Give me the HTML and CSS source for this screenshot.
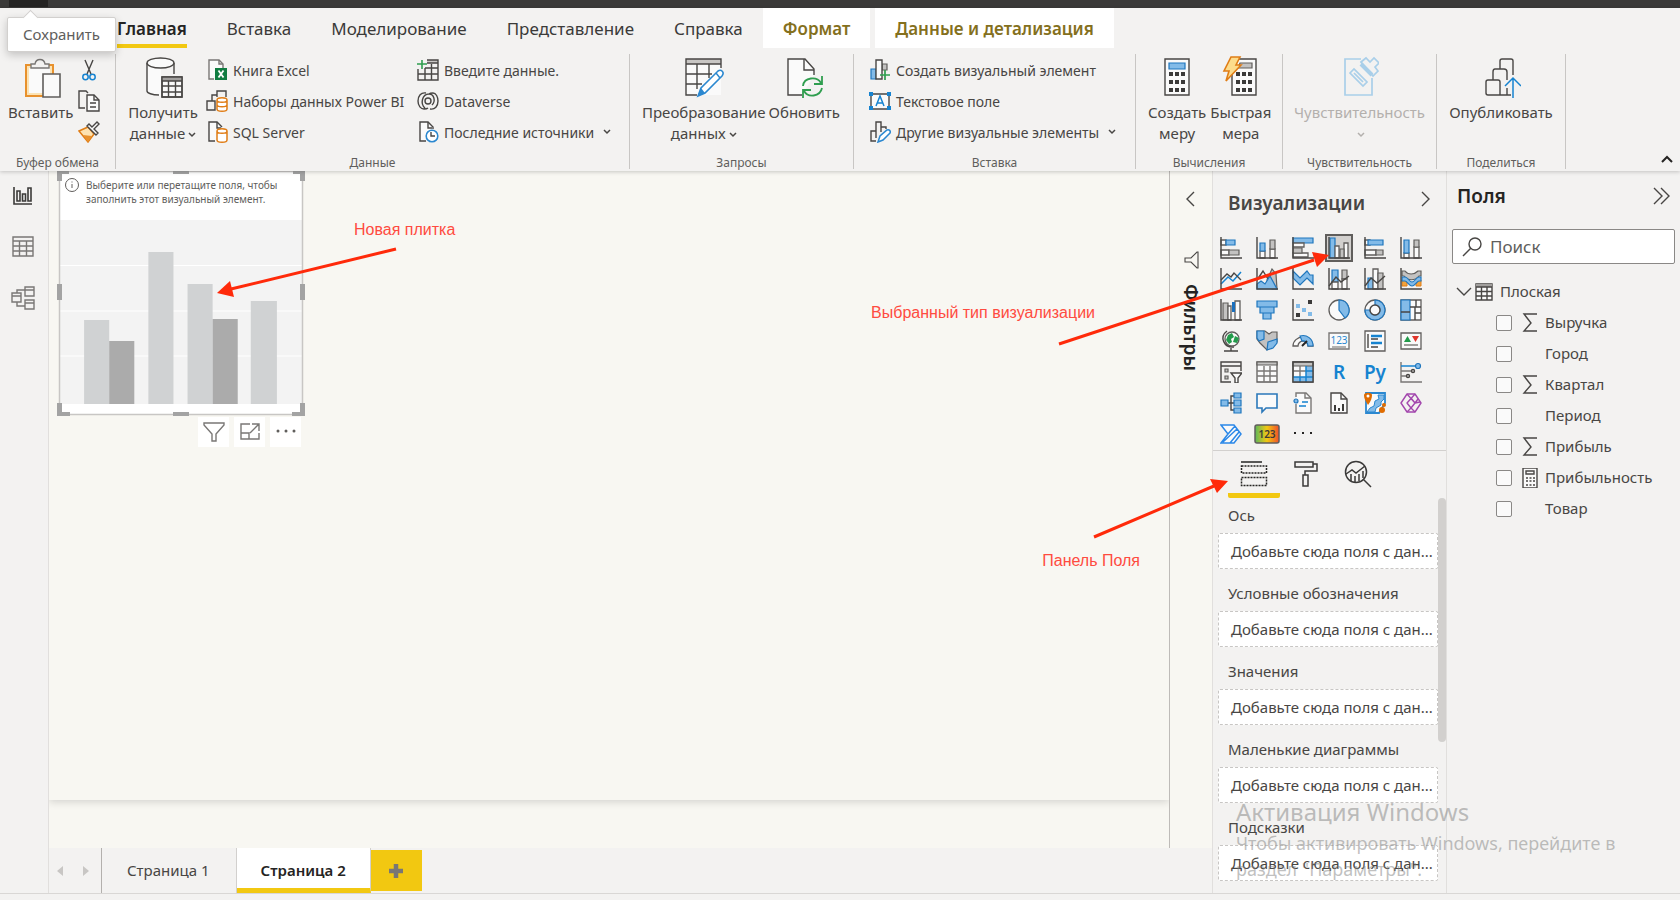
FILE: index.html
```html
<!DOCTYPE html>
<html lang="ru">
<head>
<meta charset="utf-8">
<title>Power BI Desktop</title>
<link rel="stylesheet" href="styles.css">
</head>
<body>
<div class="app">
  <div class="titlebar"><span class="titlebar-save"></span></div>
  <div class="tooltip" role="tooltip">Сохранить</div>

  <header class="ribbon">
    <nav class="tabs">
      <button class="tab tab-active">Главная</button>
      <button class="tab">Вставка</button>
      <button class="tab">Моделирование</button>
      <button class="tab">Представление</button>
      <button class="tab">Справка</button>
      <button class="tab tab-context">Формат</button>
      <button class="tab tab-context">Данные и детализация</button>
    </nav>

    <div class="groups">
      <section class="group">
        <div class="group-body clipboard">
          <button class="big">
            <svg width="40" height="42" viewBox="0 0 40 42"><path d="M5 9h27v31H5z" fill="#fbe3b4" stroke="#e8912d" stroke-width="2"/><path d="M8 12h21v25H8z" fill="#fafafa"/><path d="M10 12V8h4c1-6 9-6 10 0h4v4z" fill="#f3f2f1" stroke="#797775" stroke-width="1.4"/><path d="M22 18h17v23H22z" fill="#fafafa" stroke="#605e5c" stroke-width="1.6"/></svg>
            <span>Вставить</span>
          </button>
          <div class="mini-col">
            <button class="mini" aria-label="Вырезать"><svg width="22" height="22" viewBox="0 0 22 22"><path d="M7 1l6 14M15 1L9 15" class="k"/><circle cx="7.500" cy="18" r="2.700" class="o"/><circle cx="14.500" cy="18" r="2.700" class="o"/></svg></button>
            <button class="mini" aria-label="Копировать"><svg width="22" height="22" viewBox="0 0 22 22"><path d="M7 18H1V1h7l2 2" class="k"/><path d="M9 5h7l5 5v11H9z" class="k wf"/><path d="M16 5v5h5M12 13h6M12 17h6" class="k"/></svg></button>
            <button class="mini" aria-label="Формат по образцу"><svg width="22" height="22" viewBox="0 0 22 22"><path d="M1 10l9-4 6 7-6 8z" fill="#fde2b0" stroke="#e07d16" stroke-width="1.500"/><path d="M5 14l9 1-4 6z" fill="#e8912d"/><path d="M9 5l9 9 2-2-4-4 5-5-2-2-5 5-3-3z" class="k wf"/></svg></button>
          </div>
        </div>
        <div class="group-name">Буфер обмена</div>
      </section>

      <section class="group">
        <div class="group-body data">
          <button class="big">
            <svg width="40" height="42" viewBox="0 0 40 42"><path d="M4 7v28c0 3 6 5 14 5V8h14V7" fill="#fafafa"/><path d="M4 7v28c0 2 5 4 12 4M31 7v11" class="k"/><ellipse cx="17.500" cy="7" rx="13.500" ry="5" class="k wf"/><path d="M19 21h20v20H19z" class="k wf"/><path d="M19 21h20v4H19z" fill="#a19f9d"/><path d="M19 25h20M19 30h20M19 36h20M25.500 25v16M32.500 25v16M19 21h20v20H19z" class="k"/></svg>
            <span>Получить<br>данные<svg class="caret" width="8" height="6" viewBox="0 0 8 6"><path d="M1 1l3 3 3-3"/></svg></span>
          </button>
          <div class="links">
            <button class="link"><svg width="22" height="22" viewBox="0 0 22 22"><path d="M8 20H3V1h10l4 4v4" class="k wf lt"/><path d="M13 1v4h4" class="k lt"/><path d="M9 9h12v12H9z" fill="#107c41"/><path d="M12.500 11.500l5 7M17.500 11.500l-5 7" stroke="#fff" stroke-width="1.800"/></svg>Книга Excel</button>
            <button class="link"><svg width="22" height="22" viewBox="0 0 22 22"><path d="M1 11h8v9H1zM6 11V5h5M11 7V1h9v6" class="k"/><path d="M11 10v9c0 3 10 3 10 0v-9c0-3-10-3-10 0c0 3 10 3 10 0M11 14.500c0 3 10 3 10 0" fill="#fff" stroke="#e07d16" stroke-width="1.500"/></svg>Наборы данных Power BI</button>
            <button class="link"><svg width="22" height="22" viewBox="0 0 22 22"><path d="M9 20H3V1h8l5 5" class="k wf"/><path d="M11 1v6h4" class="k"/><path d="M11 10v9c0 3 10 3 10 0v-9c0-3-10-3-10 0c0 3 10 3 10 0" fill="#fff" stroke="#e07d16" stroke-width="1.500"/></svg>SQL Server</button>
          </div>
          <div class="links">
            <button class="link"><svg width="22" height="22" viewBox="0 0 22 22"><path d="M10 1h11v3H10z" fill="#c8c6c4"/><path d="M10 1h11v20H1V10M10 4h11M8 9h13M1 15h20M8 9v12M14.500 5v16" class="k"/><path d="M5 1v9M0 5h10" stroke="#2f9e4f" stroke-width="1.600"/></svg>Введите данные.</button>
            <button class="link"><svg width="22" height="22" viewBox="0 0 22 22"><path d="M9 3C4 2 1 6 1 11c0 5 3 8 6 8 1 0 3 0 4-1M13 19c5 1 8-3 8-8 0-4-2-8-5-8-2 0-3 0-4 1M8 18C3 14 5 4 12 4c5 0 7 7 3 11" class="k"/><circle cx="11" cy="11" r="3" class="k"/></svg>Dataverse</button>
            <button class="link"><svg width="22" height="22" viewBox="0 0 22 22"><path d="M9 20H3V1h8l5 5v2" class="k wf"/><path d="M11 1v6h4" class="k"/><circle cx="15" cy="15" r="5.800" fill="#fff" stroke="#2b88d0" stroke-width="1.600"/><path d="M14 11v4h4" class="k"/></svg>Последние источники<svg class="caret far" width="8" height="6" viewBox="0 0 8 6"><path d="M1 1l3 3 3-3"/></svg></button>
          </div>
        </div>
        <div class="group-name">Данные</div>
      </section>

      <section class="group">
        <div class="group-body queries">
          <button class="big">
            <svg width="40" height="42" viewBox="0 0 40 42"><path d="M2 3h35v36H2z" fill="#fafafa"/><path d="M2 3h35v5H2z" fill="#c8c6c4"/><path d="M37 12V3H2v36h11M2 8h35M2 18h26M2 28h16M13 8v25M25 8v14" class="k"/><path d="M14 40l3-8 17-17c3-2 7 1 4 5L21 37z" fill="#fff" stroke="#2b88d0" stroke-width="1.600"/><path d="M14 40l3-8 4 5z" fill="#2b88d0"/><path d="M32 17l4 5" stroke="#2b88d0" stroke-width="1.500"/></svg>
            <span>Преобразование<br>данных<svg class="caret" width="8" height="6" viewBox="0 0 8 6"><path d="M1 1l3 3 3-3"/></svg></span>
          </button>
          <button class="big">
            <svg width="40" height="42" viewBox="0 0 40 42"><path d="M18 39H4V3h17l9 10v6" class="k wf"/><path d="M20 3v11h10" class="k"/><path d="M19 30c1-9 14-10 18-3M38 20v8h-8M38 32c-2 9-14 10-18 3M19 42v-8h8" fill="none" stroke="#2f9e4f" stroke-width="1.800"/></svg>
            <span>Обновить</span>
          </button>
        </div>
        <div class="group-name">Запросы</div>
      </section>

      <section class="group">
        <div class="group-body insert">
          <div class="links">
            <button class="link"><svg width="22" height="22" viewBox="0 0 22 22"><path d="M2 10h5v10H2z" class="b"/><path d="M13 5h5v6h-5z" class="g"/><path d="M7 1h6v19H7z" class="k wf"/><path d="M16 11v10M11 16h10" stroke="#2f9e4f" stroke-width="1.700"/></svg>Создать визуальный элемент</button>
            <button class="link"><svg width="22" height="22" viewBox="0 0 22 22"><path d="M2 4h18v15H2z" class="k wf"/><path d="M7 16l4-10 4 10M8.500 13h5" class="o"/><path d="M0 2h4v4H0zM18 2h4v4h-4zM0 16h4v4H0zM18 16h4v4h-4z" fill="#1683d0"/></svg>Текстовое поле</button>
            <button class="link"><svg width="22" height="22" viewBox="0 0 22 22"><path d="M7 20H2V10h5M7 17V1h5v10M12 6h5v2" class="k"/><path d="M9 21l2-6 7-6c2-1 4 1 3 3l-7 7z" fill="#fff" stroke="#2b88d0" stroke-width="1.500"/></svg>Другие визуальные элементы<svg class="caret far" width="8" height="6" viewBox="0 0 8 6"><path d="M1 1l3 3 3-3"/></svg></button>
          </div>
        </div>
        <div class="group-name">Вставка</div>
      </section>

      <section class="group">
        <div class="group-body calc">
          <button class="big">
            <svg width="40" height="42" viewBox="0 0 40 42"><path d="M8 3h24v36H8z" class="k wf"/><path d="M12 7h16v6H12z" class="b"/><path d="M12 16h4v4h-4zM18 16h4v4h-4zM24 16h4v4h-4zM12 24h4v4h-4zM18 24h4v4h-4zM24 24h4v4h-4zM12 32h4v4h-4zM18 32h4v4h-4zM24 32h4v4h-4z" class="d"/></svg>
            <span>Создать<br>меру</span>
          </button>
          <button class="big">
            <svg width="40" height="42" viewBox="0 0 40 42"><path d="M11 3h24v36H11z" class="k wf"/><path d="M19 7h12v5H17z" class="g"/><path d="M15 16h4v4h-4zM21 16h4v4h-4zM27 16h4v4h-4zM15 24h4v4h-4zM21 24h4v4h-4zM27 24h4v4h-4zM15 32h4v4h-4zM21 32h4v4h-4zM27 32h4v4h-4z" class="d"/><path d="M10 1h9l-4 8h5L5 25l3-10H3z" fill="#fddc8c" stroke="#e07d16" stroke-width="1.600"/></svg>
            <span>Быстрая<br>мера</span>
          </button>
        </div>
        <div class="group-name">Вычисления</div>
      </section>

      <section class="group">
        <div class="group-body single">
          <button class="big big-off" disabled>
            <svg width="40" height="42" viewBox="0 0 40 42" fill="none" stroke="#a9cfe9" stroke-width="1.700"><path d="M22 3H6v36h27V22"/><path d="M11 17l4-4 13 13-4 4zM15 17l9 9"/><path d="M22 6l5-4 4 4 4-4 5 5-4 4 3 4-5 5z" fill="#f3f2f1"/><path d="M22 8l11 11" stroke-width="4"/></svg>
            <span>Чувствительность<br><svg class="caret" width="8" height="6" viewBox="0 0 8 6"><path d="M1 1l3 3 3-3"/></svg></span>
          </button>
        </div>
        <div class="group-name">Чувствительность</div>
      </section>

      <section class="group">
        <div class="group-body single">
          <button class="big">
            <svg width="40" height="42" viewBox="0 0 40 42"><path d="M32 19V5c0-1-1-2-2-2H21c-1 0-2 1-2 2v8M12 24V16c0-2 1-3 2-3h9c2 0 3 1 3 3v8M26 32v7M30 39H7c-1 0-2-1-2-2V26c0-1 1-2 2-2h10c1 0 2 1 2 2v13" class="k"/><path d="M32 42V22M24 30l8-8 8 8" class="o"/></svg>
            <span>Опубликовать</span>
          </button>
        </div>
        <div class="group-name">Поделиться</div>
      </section>

      <button class="collapse" aria-label="Свернуть ленту"><svg width="12" height="8" viewBox="0 0 12 8"><path d="M1 7l5-5 5 5" fill="none" stroke="#252423" stroke-width="2"/></svg></button>
    </div>
  </header>

  <main class="workspace">
    <aside class="rail">
      <button aria-label="Отчет"><svg width="24" height="24" viewBox="0 0 24 24" fill="none" stroke="#3b3a39" stroke-width="1.600"><path d="M3 3v17h18M6 7h3v10H6zM11.500 10h3v7h-3zM17 4h3v13h-3z"/></svg></button>
      <button aria-label="Данные"><svg width="24" height="24" viewBox="0 0 24 24" fill="none" stroke="#797775" stroke-width="1.400"><path d="M2 2h20v19H2zM2 6h20M2 11h20M2 16h20M8.500 6v15M15.500 6v15"/></svg></button>
      <button aria-label="Модель"><svg width="24" height="24" viewBox="0 0 24 24" fill="none" stroke="#797775" stroke-width="1.400"><path d="M14 1h9v9h-9zM14 4h9M14 14h9v9h-9zM14 17h9M1 7h9v9H1zM1 10h9M6 7V4h8M6 16v4h8"/></svg></button>
    </aside>

    <div class="center">
      <div class="canvas-row">
        <div class="canvas">
          <div class="page">
            <div class="tile">
              <div class="tile-hint">
                <svg width="14" height="14" viewBox="0 0 14 14" fill="none" stroke="#605e5c"><circle cx="7" cy="7" r="6.500"/><path d="M7 6v4M7 3.500v1"/></svg>
                <p>Выберите или перетащите поля, чтобы заполнить этот визуальный элемент.</p>
              </div>
              <svg class="tile-chart" viewBox="0 0 242 184" preserveAspectRatio="none"><path d="M0 0h242v184H0z" fill="#f3f3f3"/><path d="M0 45.500h242M0 91h242M0 136h242" stroke="#fff"/><path d="M25 100h25v84H25zM89 32h25v152H89zM128 64h25v120h-25zM191 81h26v103h-26z" fill="#d0d2d3"/><path d="M50 121h25v63H50zM153 99h25v85h-25z" fill="#ababab"/></svg>
              <svg class="tile-frame" width="248" height="248" viewBox="0 0 248 248"><path d="M2.500 2.500h243v243H2.500z" fill="none" stroke="#c8c6c4" stroke-width="1.500"/><path d="M0 12V1h12v4H5v7zM116 1h16v4h-16zM236 1h12v11h-5V5h-7zM0 115h5v16H0zM243 115h5v16h-5zM0 234h5v9h8v4H0zM116 243h16v4h-16zM235 243h8v-9h5v13h-13z" fill="#a3a3a3"/></svg>
              <div class="tile-tools">
                <button aria-label="Фильтры"><svg width="24" height="24" viewBox="0 0 24 24" fill="none" stroke="#797775" stroke-width="1.400"><path d="M2 3h20v2l-8 9v7h-4v-7L2 5z"/></svg></button>
                <button aria-label="Режим фокусировки"><svg width="24" height="24" viewBox="0 0 24 24" fill="none" stroke="#797775" stroke-width="1.400"><path d="M12 4H3v15h18v-6M3 13h8v6M14 4h7v7M21 4l-9 9"/></svg></button>
                <button aria-label="Дополнительные параметры"><svg width="24" height="24" viewBox="0 0 24 24" fill="#605e5c"><circle cx="4" cy="11" r="1.500"/><circle cx="12" cy="11" r="1.500"/><circle cx="20" cy="11" r="1.500"/></svg></button>
              </div>
            </div>
          </div>
        </div>
        <aside class="filters">
          <button aria-label="Развернуть"><svg width="12" height="16" viewBox="0 0 12 16"><path d="M9 1L2 8l7 7" class="k"/></svg></button>
          <svg width="16" height="18" viewBox="0 0 16 18"><path d="M15 1v16h-1L8 11H2V7h6l6-6z" class="k thin"/></svg>
          <span>Фильтры</span>
        </aside>
      </div>
      <footer class="pages">
        <button class="page-arrow" aria-label="Назад"><svg width="6" height="10" viewBox="0 0 6 10"><path d="M6 0v10L0 5z" fill="#c8c6c4"/></svg></button>
        <button class="page-arrow" aria-label="Вперед"><svg width="6" height="10" viewBox="0 0 6 10"><path d="M0 0v10l6-5z" fill="#c8c6c4"/></svg></button>
        <button class="page-tab first">Страница 1</button>
        <button class="page-tab current">Страница 2</button>
        <button class="page-add" aria-label="Новая страница"><svg width="16" height="16" viewBox="0 0 16 16"><path d="M8 1v14M1 8h14" stroke="#797775" stroke-width="4.500"/></svg></button>
      </footer>
    </div>

    <aside class="viz">
      <div class="viz-head"><h2>Визуализации</h2><button aria-label="Свернуть"><svg width="10" height="16" viewBox="0 0 10 16"><path d="M1 1l7 7-7 7" class="k"/></svg></button></div>
      <div class="viz-grid">
        <button aria-label="Линейчатая с накоплением"><svg viewBox="0 0 22 22"><path d="M1 3h5v5H1zM1 13h8v5H1z" class="w"/><path d="M6 3h9v5H6z" class="b"/><path d="M9 13h10v5H9z" class="g"/><path d="M1 0v21h21" class="k"/></svg></button>
        <button aria-label="Гистограмма с накоплением"><svg viewBox="0 0 22 22"><path d="M4 14h5v7H4zM14 12h5v9h-5z" class="w"/><path d="M4 6h5v8H4z" class="b"/><path d="M14 3h5v9h-5z" class="g"/><path d="M1 0v21h21" class="k"/></svg></button>
        <button aria-label="Линейчатая с группировкой"><svg viewBox="0 0 22 22"><path d="M1 1h20v5H1z" class="b"/><path d="M1 6h11v4H1zM1 16h15v4H1z" class="w"/><path d="M1 11h9v5H1z" class="g"/><path d="M1 0v21h21" class="k"/></svg></button>
        <button class="picked" aria-label="Гистограмма с группировкой"><svg viewBox="0 0 22 22"><path d="M2 1h5v20H2z" class="b"/><path d="M7 9h4v12H7zM16 6h4v15h-4z" class="w"/><path d="M12 12h4v9h-4z" class="g"/><path d="M1 0v21h21" class="k"/></svg></button>
        <button aria-label="Нормированная линейчатая"><svg viewBox="0 0 22 22"><path d="M1 3h5v5H1zM1 13h11v5H1z" class="w"/><path d="M4 3h15v5H4z" class="b"/><path d="M12 13h7v5h-7z" class="g"/><path d="M1 0v21h21" class="k"/></svg></button>
        <button aria-label="Нормированная гистограмма"><svg viewBox="0 0 22 22"><path d="M4 16h5v5H4zM14 10h5v11h-5z" class="w"/><path d="M4 3h5v13H4z" class="b"/><path d="M14 3h5v7h-5z" class="g"/><path d="M1 0v21h21" class="k"/></svg></button>

        <button aria-label="График"><svg viewBox="0 0 22 22"><path d="M1 16l7-7 5 4 8-9" class="o"/><path d="M1 12l6-6 4 3 3-4 7 7" class="k"/><path d="M1 0v21h21" class="k"/></svg></button>
        <button aria-label="Диаграмма с областями"><svg viewBox="0 0 22 22"><path d="M11 12l5-11 4 5 1 15h-5z" class="g"/><path d="M1 12l6-9 5 8" class="k"/><path d="M1 21v-5l4-3 4 3 5-8 7 13z" class="b"/><path d="M1 0v21h21" class="k"/></svg></button>
        <button aria-label="Области с накоплением"><svg viewBox="0 0 22 22"><path d="M1 3l7 7 7-7 3 4h3v9l-3-3-3-3-7 7-7-7z" class="b"/><path d="M1 0v21h21" class="k"/></svg></button>
        <button aria-label="График и гистограмма с накоплением"><svg viewBox="0 0 22 22"><path d="M4 2h6v12H4z" class="b"/><path d="M14 2h5v9h-5z" class="g"/><path d="M4 14h6v7H4zM14 11h5v10h-5z" class="w"/><path d="M1 18l7-9 5 5 8-6" class="k"/><path d="M1 0v21h21" class="k"/></svg></button>
        <button aria-label="График и гистограмма"><svg viewBox="0 0 22 22"><path d="M4 10h5v11H4z" class="b"/><path d="M9 1h5v20H9z" class="w"/><path d="M14 5h5v16h-5z" class="g"/><path d="M1 18l6-8 6 5 8-7" class="k"/><path d="M1 0v21h21" class="k"/></svg></button>
        <button aria-label="Ленточная диаграмма"><svg viewBox="0 0 22 22"><path d="M2 12h5v6H2zM16 12h5v6h-5z" fill="#f2a33c" stroke="#e07d16"/><path d="M2 3h3c3 4 9 4 13 0h3v5h-2c-4 5-11 5-15 0H2z" class="g"/><path d="M2 9h3c3 0 4 5 7 5s4-5 7-5h2v4h-2c-2 0-4 5-7 5s-5-5-7-5H2z" class="b"/><path d="M1 0v21h21" class="k"/></svg></button>

        <button aria-label="Каскадная диаграмма"><svg viewBox="0 0 22 22"><path d="M3 4h5v17H3z" class="g"/><path d="M8 7h3v14H8zM15 2h5v19h-5z" class="w"/><path d="M12 3h3v10h-3z" fill="#1a6fbd"/><path d="M1 0v21h21" class="k"/></svg></button>
        <button aria-label="Воронка"><svg viewBox="0 0 22 22"><path d="M1 2h20v6H1zM4 8h14v6H4zM7 14h8v6H7z" class="b"/></svg></button>
        <button aria-label="Точечная диаграмма"><svg viewBox="0 0 22 22"><path d="M1 0v21h21" class="k"/><path d="M4 5h4v4H4zM10 9h4v4h-4zM16 13h4v4h-4z" fill="#83bbe8"/><path d="M16 1h4v4h-4zM4 14h4v4H4z" class="d"/></svg></button>
        <button aria-label="Круговая диаграмма"><svg viewBox="0 0 22 22"><circle cx="11" cy="11" r="10" class="w"/><path d="M11 1a10 10 0 0 1 6 18l-6-8z" class="b"/></svg></button>
        <button aria-label="Кольцевая диаграмма"><svg viewBox="0 0 22 22"><circle cx="11" cy="11" r="10" class="w"/><path d="M11 1a10 10 0 1 1-10 10h5a5 5 0 1 0 5-5z" class="b"/><circle cx="11" cy="11" r="5" class="k wf"/></svg></button>
        <button aria-label="Диаграмма дерева"><svg viewBox="0 0 22 22"><path d="M1 1h20v20H1z" class="w"/><path d="M1 1h9v20H1z" class="b"/><path d="M1 13h9M10 8h11M15 8v13M15 14h6M16 1v7" class="k"/></svg></button>

        <button aria-label="Карта"><svg viewBox="0 0 22 22"><circle cx="12" cy="9" r="7" class="w"/><path d="M8 5l4-2 2 4-3 2 1 3-3 2-3-4zM15 6l4 2-2 5-4-1z" fill="#239b4b"/><path d="M7 1C-1 7 4 18 14 17M11 18v3M4 21h14" class="k"/></svg></button>
        <button aria-label="Картограмма"><svg viewBox="0 0 22 22"><path d="M1 1h8l4 3 3-2h5v10l-4 2-6 6-7-7-3-4z" class="g"/><path d="M1 1h7v8l-5 2-2-3zM12 12l9-3v4l-4 5-6 2z" class="b"/></svg></button>
        <button aria-label="Датчик"><svg viewBox="0 0 22 22"><path d="M1 16a10 9 0 0 1 20 0h-5a5 5 0 0 0-10 0z" class="w"/><path d="M8 6a10 10 0 0 1 13 10h-5a5 5 0 0 0-6-5z" class="b"/><path d="M10 16l5-5" stroke="#252423" stroke-width="2"/></svg></button>
        <button aria-label="Карточка"><svg viewBox="0 0 22 22"><path d="M1 3h20v16H1z" class="k lt wf"/><path d="M4 17h14" class="k lt thin"/><text x="11" y="14" font-size="10" text-anchor="middle" fill="#2b88d0">123</text></svg></button>
        <button aria-label="Многострочная карточка"><svg viewBox="0 0 22 22"><path d="M1 1h20v20H1z" class="w"/><path d="M4 4v14" class="k"/><path d="M7 6h11M7 13h11" stroke="#1683d0" stroke-width="2.500"/><path d="M7 9h7M7 17h7" class="k"/></svg></button>
        <button aria-label="Ключевой показатель"><svg viewBox="0 0 22 22"><path d="M1 3h20v16H1z" class="w"/><path d="M4 12l3.500-6 3.500 6z" fill="#239b4b"/><path d="M12 6h7l-3.500 6z" fill="#e0352b"/><path d="M4 15h14" class="k lt"/></svg></button>

        <button aria-label="Срез"><svg viewBox="0 0 22 22"><path d="M11 21H1V1h20v9M1 5h20" class="k"/><path d="M5 8h3v3H5zM5 15h3v3H5z" class="g"/><path d="M11 12h11l-4 5v5h-3v-5z" class="k wf"/></svg></button>
        <button aria-label="Таблица"><svg viewBox="0 0 22 22"><path d="M1 1h20v20H1z" class="w"/><path d="M1 1h20v3H1z" class="g"/><path d="M1 10h20M1 15h20M8 5v16M14 5v16" class="k lt"/></svg></button>
        <button aria-label="Матрица"><svg viewBox="0 0 22 22"><path d="M1 1h20v20H1z" class="w"/><path d="M14 5h7v16H1v-5h13z" fill="#83bbe8"/><path d="M1 1h20v4H1z" class="g"/><path d="M1 10h13M8 5v11" class="k lt"/><path d="M14 5v16M14 10h7M1 16h20M8 16v5" class="o"/><path d="M1 1h20v20H1z" class="k"/></svg></button>
        <button aria-label="Визуальный элемент скрипта R"><b>R</b></button>
        <button aria-label="Визуальный элемент Python"><b>Py</b></button>
        <button aria-label="Ключевые факторы влияния"><svg viewBox="0 0 22 22"><path d="M1 1v20h21M1 10h10M1 15h6" class="k lt"/><circle cx="13" cy="10" r="1.500" class="k"/><circle cx="8" cy="15" r="1.500" class="k"/><path d="M1 5h14" class="o"/><circle cx="18" cy="5" r="2.500" class="b"/></svg></button>

        <button aria-label="Дерево декомпозиции"><svg viewBox="0 0 22 22"><path d="M8 11h6M14 4h-3v14h3" class="k"/><path d="M1 8h7v6H1zM14 1h7v5h-7zM14 8h7v6h-7zM14 16h7v5h-7z" class="b"/></svg></button>
        <button aria-label="Вопросы и ответы"><svg viewBox="0 0 22 22"><path d="M1 2h20v14H10l-4 4v-4H1z" fill="#fafafa" stroke="#2b78ba" stroke-width="1.600"/></svg></button>
        <button aria-label="Интеллектуальное повествование"><svg viewBox="0 0 22 22"><path d="M4 5V1h10l5 5v15H4V12" class="k wf lt"/><path d="M13 1v5h6" class="k lt"/><path d="M10 10h6M7 14h7" class="o"/><circle cx="4" cy="9" r="2" class="b"/></svg></button>
        <button aria-label="Отчет с разбивкой на страницы"><svg viewBox="0 0 22 22"><path d="M3 1h10l6 6v14H3z" class="k wf"/><path d="M13 1v6h6" class="k"/><path d="M6 13h2v6H6zM10 16h2v3h-2zM14 12h2v7h-2z" class="d"/></svg></button>
        <button aria-label="Карты ArcGIS"><svg viewBox="0 0 22 22"><path d="M2 1h19v10l-6 10H2z" fill="#fafafa" stroke="#2b88d0" stroke-width="1.800"/><path d="M14 3h6v4l-3 3v3l-5 3-1 4H3l3-4 4-2 1-5 4-2z" fill="#83bbe8" stroke="#2b88d0"/><path d="M4 13C1 8 0 6 0 3s8-3 8 0-1 6-4 10z" fill="#e06c00"/><circle cx="4" cy="4" r="1.500" fill="#fff"/><circle cx="18" cy="18" r="3" fill="#e06c00"/><circle cx="20" cy="13" r="2" fill="#e06c00"/></svg></button>
        <button aria-label="Power Apps"><svg viewBox="0 0 22 22" fill="none" stroke="#a347ad" stroke-width="1.400" stroke-linejoin="round"><path d="M7 2h8l6 9-6 9H7l-6-9z"/><path d="M15 2l-8 9 4 5 4-5-8-9M15 11l5-1M15 20l-4-4-4 4M11 6l4 5 3-4"/></svg></button>

        <button aria-label="Power Automate"><svg viewBox="0 0 22 22" fill="#fafafa" stroke="#2b88e8" stroke-width="1.500"><path d="M1 2h13l7 9-7 9H1l7-9zM8 11l7-8M3 19L17 6M10 20l9-11"/></svg></button>
        <button aria-label="Карточка с градиентом"><svg class="wide" viewBox="0 0 26 20"><defs><linearGradient id="heat"><stop offset="0" stop-color="#5cb85c"/><stop offset=".5" stop-color="#f2c811"/><stop offset="1" stop-color="#f04e2b"/></linearGradient></defs><rect x="1" y="1" width="24" height="18" rx="2" fill="url(#heat)" stroke="#605e5c" stroke-width="1.500"/><text x="13" y="14" font-size="10" font-weight="600" text-anchor="middle" fill="#3b3a39">123</text></svg></button>
        <button aria-label="Другие визуальные элементы"><svg viewBox="0 0 22 22" class="dots"><path d="M2 9h2v2H2zM10 9h2v2h-2zM18 9h2v2h-2z"/></svg></button>
      </div>

      <div class="viz-tabs">
        <button class="on" aria-label="Поля"><svg width="28" height="28" viewBox="0 0 28 28" fill="none" stroke="#252423" stroke-width="1.500"><path d="M1 2h21"/><path d="M1.500 6h25v7h-25zM1.500 17.500h25v8h-25z" stroke-dasharray="2 1"/></svg></button>
        <button aria-label="Формат"><svg width="28" height="28" viewBox="0 0 28 28" fill="none" stroke="#3b3a39" stroke-width="1.500"><path d="M3 2h18v5H3zM21 4h4v7H13v4M11 15h5v11h-5z"/></svg></button>
        <button aria-label="Аналитика"><svg width="28" height="28" viewBox="0 0 28 28" fill="none" stroke="#3b3a39" stroke-width="1.500"><circle cx="12" cy="12" r="10.500"/><path d="M19 19l8 8M2 14l6-4 4 3 9-7M7 14v7M11 16v6M15 14v7M19 11v7"/></svg></button>
      </div>

      <div class="wells">
        <div class="well-list">
          <section><h3>Ось</h3><div class="well">Добавьте сюда поля с дан...</div></section>
          <section><h3>Условные обозначения</h3><div class="well">Добавьте сюда поля с дан...</div></section>
          <section><h3>Значения</h3><div class="well">Добавьте сюда поля с дан...</div></section>
          <section><h3>Маленькие диаграммы</h3><div class="well">Добавьте сюда поля с дан...</div></section>
          <section><h3>Подсказки</h3><div class="well">Добавьте сюда поля с дан...</div></section>
        </div>
        <div class="scroll"><div class="thumb"></div></div>
      </div>
    </aside>

    <aside class="fields">
      <div class="fields-head"><h2>Поля</h2><button aria-label="Свернуть"><svg width="18" height="18" viewBox="0 0 18 18"><path d="M1 1l8 8-8 8M8 1l8 8-8 8" class="k"/></svg></button></div>
      <div class="search">
        <svg width="20" height="20" viewBox="0 0 20 20"><circle cx="13" cy="7" r="6" class="k"/><path d="M9 11l-8 8" class="k"/></svg>
        <input type="search" placeholder="Поиск" aria-label="Поиск">
      </div>
      <button class="tree-table">
        <svg width="16" height="10" viewBox="0 0 16 10"><path d="M1 1l7 7 7-7" class="k"/></svg>
        <svg width="18" height="18" viewBox="0 0 18 18"><path d="M1 1h16v16H1z" class="k wf"/><path d="M1 1h16v3H1z" fill="#a19f9d"/><path d="M1 4h16M1 8.500h16M1 13h16M6.500 4v13M12 4v13" class="k"/></svg>
        <span>Плоская</span>
      </button>
      <ul class="tree">
        <li><label><input type="checkbox"><svg viewBox="0 0 16 20"><path d="M15 1H2l7 9-7 8h13" class="k"/></svg>Выручка</label></li>
        <li><label><input type="checkbox"><svg viewBox="0 0 16 20"></svg>Город</label></li>
        <li><label><input type="checkbox"><svg viewBox="0 0 16 20"><path d="M15 1H2l7 9-7 8h13" class="k"/></svg>Квартал</label></li>
        <li><label><input type="checkbox"><svg viewBox="0 0 16 20"></svg>Период</label></li>
        <li><label><input type="checkbox"><svg viewBox="0 0 16 20"><path d="M15 1H2l7 9-7 8h13" class="k"/></svg>Прибыль</label></li>
        <li><label><input type="checkbox"><svg viewBox="0 0 16 20"><path d="M1 0h14v20H1z" class="k wf"/><path d="M4 3h8v3H4z" class="k"/><path d="M4 10h9M4 13h9M4 17h9" class="k" stroke-dasharray="2 1.500"/></svg>Прибыльность</label></li>
        <li><label><input type="checkbox"><svg viewBox="0 0 16 20"></svg>Товар</label></li>
      </ul>
    </aside>
  </main>
  <div class="statusbar"></div>

  <div class="notes-left">
    <svg width="400" height="400" viewBox="0 0 400 400"><path d="M396 249L231 289" stroke="#ff2a0a" stroke-width="3"/><path d="M217 293l13-12 4 16z" fill="#ff2a0a"/></svg>
    <p class="note note-tile">Новая плитка</p>
  </div>
  <div class="notes-right">
    <svg width="640" height="600" viewBox="1040 0 640 600"><path d="M1059 344L1314 260M1094 537L1214 486" stroke="#ff2a0a" stroke-width="3"/><path d="M1329 255l-12 12-5-15zM1228 481l-11 12-7-14z" fill="#ff2a0a"/></svg>
    <p class="note note-type">Выбранный тип визуализации</p>
    <p class="note note-panel">Панель Поля</p>
  </div>
  <div class="watermark"><strong>Активация Windows</strong><p>Чтобы активировать Windows, перейдите в раздел "Параметры".</p></div>
</div>
</body>
</html>
```

FILE: styles.css
```css
* { box-sizing: border-box; }
body { margin: 0; font: 15px/21px "Noto Sans", "Open Sans", sans-serif; color: #484644; background: #f3f2f1; }
button { margin: 0; padding: 0; border: 0; background: none; font: inherit; color: inherit; }
h2, h3, p, ul { margin: 0; padding: 0; font-weight: 400; }
svg { display: block; flex: none; }

.k { fill: none; stroke: #484644; stroke-width: 1.4; }
.lt { stroke: #797775; }
.thin { stroke-width: 1.1; }
.wf { fill: #fafafa; }
.o { fill: none; stroke: #1683d0; stroke-width: 1.5; }
.b { fill: #83bbe8; stroke: #1f76bd; stroke-width: 1.2; }
.g { fill: #c3c2c1; stroke: #605e5c; stroke-width: 1.2; }
.w { fill: #fafafa; stroke: #605e5c; stroke-width: 1.3; }
.d { fill: #3b3a39; }

.app { position: relative; display: flex; flex-direction: column; height: 100vh; overflow: hidden; }
.titlebar { flex: none; height: 8px; background: #3b3a39; padding-left: 9px; }
.titlebar-save { display: block; width: 39px; height: 7px; background: #252423; }

.tooltip { position: absolute; z-index: 3; left: 7px; top: 17px; padding: 6px 15px; border: 1px solid #d2d0ce; border-radius: 2px; background: #fff; color: #605e5c; box-shadow: 0 3px 8px rgba(0, 0, 0, .2); }
.tooltip::before { content: ""; position: absolute; left: 17px; top: -6px; width: 10px; height: 10px; background: #fff; border: solid #d2d0ce; border-width: 1px 0 0 1px; transform: rotate(45deg); }

.ribbon { position: relative; z-index: 2; flex: none; height: 163px; box-shadow: 0 1px 4px rgba(0, 0, 0, .2); background: #f3f2f1; }
.tabs { display: flex; padding-left: 97px; height: 40px; }
.tab { padding: 0 20px; font-size: 17px; color: #3b3a39; }
.tab-active { position: relative; font-weight: 600; color: #252423; }
.tab-active::after { content: ""; position: absolute; left: 20px; right: 20px; bottom: 0; height: 4px; background: #f2c811; }
.tab-context { background: #fff; color: #84701d; font-weight: 600; margin-right: 5px; }

.groups { display: grid; grid-template-columns: 116px 514px 224px 282px 147px 154px 129px 1fr; padding-top: 6px; height: 121px; }
.group { display: flex; flex-direction: column; border-right: 1px solid #c8c6c4; }
.group-body { display: flex; flex: 1; }
.group-name { text-align: center; font-size: 12px; line-height: 12px; color: #605e5c; }
.big { display: flex; flex-direction: column; align-items: center; align-self: flex-start; gap: 4px; padding-top: 2px; white-space: nowrap; }
.big-off { color: #b3b0ad; }
.caret { display: inline-block; margin-left: 3px; vertical-align: middle; fill: none; stroke: currentColor; stroke-width: 1.5; }
.far { margin-left: 4px; }
.clipboard { padding-left: 8px; gap: 5px; }
.mini-col, .links { display: flex; flex-direction: column; gap: 9px; padding-top: 5px; }
.mini { height: 22px; }
.link { display: flex; align-items: center; gap: 5px; height: 22px; font-size: 14px; white-space: nowrap; }
.data { display: grid; grid-template-columns: 90px 211px 1fr; }
.data .big { justify-self: center; padding-left: 4px; }
.queries { padding-left: 12px; gap: 3px; }
.insert { padding-left: 15px; }
.calc { padding-left: 12px; gap: 4px; }
.single { justify-content: center; }
.collapse { align-self: end; justify-self: end; padding: 0 7px 6px 0; }

.workspace { flex: 1; display: flex; min-height: 0; }
.rail { flex: none; width: 49px; border-right: 1px solid #e1dfdd; display: flex; flex-direction: column; align-items: center; gap: 27px; padding: 13px 2px 0 0; }
.rail button { height: 24px; }
.center { flex: 1; display: flex; flex-direction: column; min-width: 0; }
.canvas-row { flex: 1; display: flex; min-height: 0; background: #f8f7f2; }
.canvas { flex: 1; padding-bottom: 48px; overflow: hidden; border-right: 1px solid #bebbb8; }
.page { position: relative; height: 100%; box-shadow: 0 2px 8px rgba(0, 0, 0, .15); }
.tile { position: absolute; left: 10px; top: 0; width: 243px; background: #fff; height: 244px; }
.tile-hint { display: flex; gap: 7px; padding: 7px 10px 0 6px; height: 49px; font-size: 10px; line-height: 14px; color: #605e5c; }
.tile-chart { width: 100%; height: 184px; }
.tile-frame { position: absolute; left: -2px; top: -2px; }
.tile-tools { position: absolute; right: 1px; top: 246px; display: flex; gap: 5px; }
.tile-tools button { display: grid; place-items: center; width: 31px; height: 30px; background: #fff; }

.filters { flex: none; width: 42px; display: flex; flex-direction: column; align-items: center; padding-top: 20px; }
.filters button { margin-bottom: 44px; height: 16px; }
.filters span { margin-top: 15px; writing-mode: vertical-rl; font-size: 19px; line-height: 24px; font-weight: 600; color: #252423; }

.pages { flex: none; height: 45px; display: flex; }
.page-arrow { width: 26px; padding-right: 4px; display: grid; place-items: center; }
.page-tab { padding: 0 24px; border-right: 1px solid #d2d0ce; }
.first { border-left: 1px solid #b3b0ad; padding: 0 26px 0 25px; }
.current { background: #fff; font-weight: 600; color: #252423; border-bottom: 5px solid #f2c811; padding-top: 5px; }
.page-add { width: 51px; margin: 2px 0; background: #f2c811; display: grid; place-items: center; }

.viz { flex: none; width: 235px; border: solid #e1dfdd; border-width: 0 1px; display: flex; flex-direction: column; }
.viz-head { display: flex; justify-content: space-between; padding: 20px 15px 0 15px; height: 61px; }
.viz h2 { font-size: 19px; line-height: 24px; font-weight: 600; }
.viz-head button { height: 16px; }
.viz-grid { display: grid; grid-template-columns: repeat(6, 36px); grid-auto-rows: 31px; padding-bottom: 1px; border-bottom: 1px solid #d2d0ce; }
.viz-grid button { display: grid; place-items: center; }
.viz-grid svg { width: 22px; height: 22px; }
.viz-grid .wide { width: 26px; height: 20px; }
.viz-grid b { font-size: 19px; line-height: 22px; font-weight: 600; color: #1683d0; }
.viz-grid .picked { width: 28px; height: 28px; place-self: center; background: #d2d0ce; border: 2px solid #605e5c; }
.dots { fill: #252423; }
.viz-tabs { display: flex; padding: 9px 0 0 15px; height: 47px; flex: none; }
.viz-tabs button { width: 52px; display: flex; justify-content: center; border-bottom: 5px solid transparent; border-radius: 2px; }
.viz-tabs .on { border-bottom-color: #f2c811; }
.wells { flex: 1; display: flex; min-height: 0; }
.well-list { flex: 1; padding: 0 0 0 5px; min-width: 0; }
.well-list h3 { font-size: 15px; line-height: 22px; padding: 6px 0 6px 10px; height: 35px; }
.well-list section + section { padding-top: 7px; }
.well { height: 36px; padding: 0 0 0 12px; line-height: 34px; white-space: nowrap; overflow: hidden; background: #fff; border: 1px dashed #c8c6c4; border-radius: 2px; }
.scroll { width: 8px; }
.thumb { height: 244px; border-radius: 4px; background: #d2d0ce; }

.fields { flex: none; width: 233px; padding: 0 5px; }
.fields-head { display: flex; justify-content: space-between; align-items: center; padding: 10px 4px 0 5px; height: 39px; }
.fields h2 { font-size: 19px; line-height: 24px; font-weight: 600; color: #252423; }
.search { display: flex; align-items: center; gap: 8px; margin-top: 19px; height: 35px; padding: 0 9px; background: #fff; border: 1px solid #8a8886; border-radius: 2px; }
.search input { flex: 1; min-width: 0; padding: 0; border: 0; outline: 0; background: none; font: inherit; font-size: 17px; color: #605e5c; }
.search input::placeholder { color: #605e5c; opacity: 1; }
.tree-table { display: flex; align-items: center; height: 31px; margin: 12px 0 0 4px; }
.tree-table svg + svg { margin: 0 7px 0 3px; }
.tree { list-style: none; padding-left: 44px; }
.tree label { display: flex; align-items: center; height: 31px; }
.tree input { appearance: none; margin: 0 10px 0 0; width: 16px; height: 16px; border: 1px solid #8a8886; border-radius: 2px; background: #fafafa; }
.tree svg { width: 16px; height: 20px; margin-right: 7px; }

.statusbar { flex: none; height: 7px; border-top: 1px solid #d9d7d5; }

.notes-left, .notes-right, .watermark { position: absolute; top: 0; z-index: 4; pointer-events: none; }
.notes-left { left: 0; }
.notes-right { right: 0; }
.note { position: absolute; white-space: nowrap; font: 16px/18px "Liberation Sans", Arial, sans-serif; color: #ff4b40; }
.note-tile { left: 354px; top: 221px; }
.note-type { right: 585px; top: 304px; }
.note-panel { right: 540px; top: 552px; }
.watermark { top: auto; bottom: 18px; right: 44px; width: 400px; font-size: 18px; line-height: 26px; color: rgba(130, 130, 130, .5); }
.watermark strong { display: block; font-size: 24px; line-height: 36px; font-weight: 400; }
```
